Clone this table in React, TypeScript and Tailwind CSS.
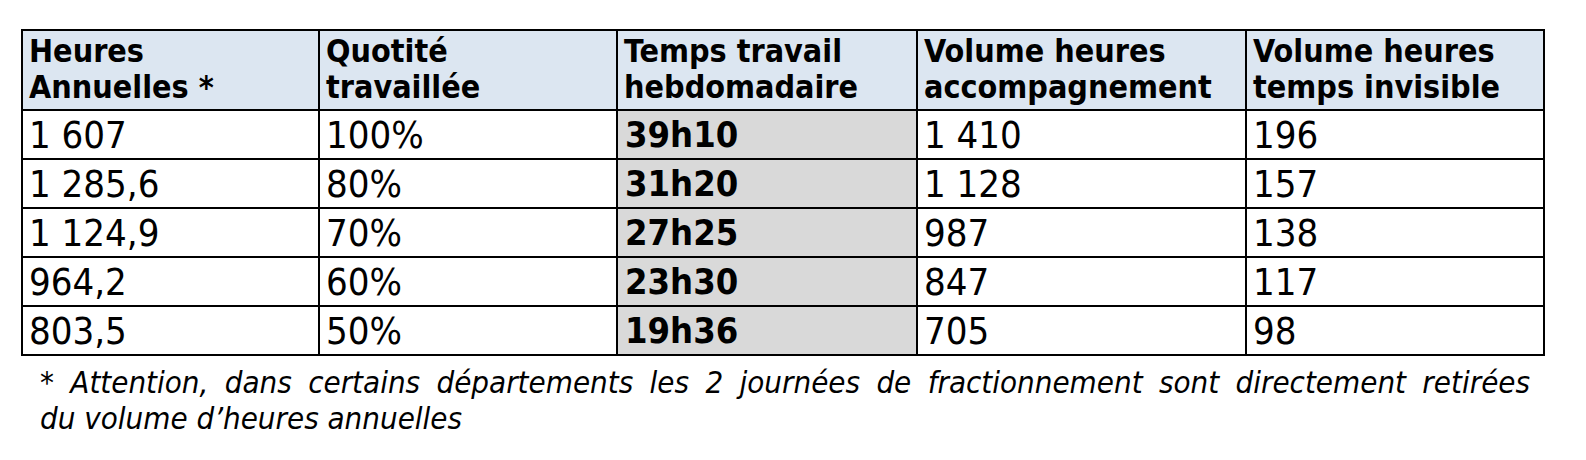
import React from "react";

const rows = [
  ["1 607", "100%", "39h10", "1 410", "196"],
  ["1 285,6", "80%", "31h20", "1 128", "157"],
  ["1 124,9", "70%", "27h25", "987", "138"],
  ["964,2", "60%", "23h30", "847", "117"],
  ["803,5", "50%", "19h36", "705", "98"],
];

const headers: [string, string][] = [
  ["Heures", "Annuelles *"],
  ["Quotité", "travaillée"],
  ["Temps travail", "hebdomadaire"],
  ["Volume heures", "accompagnement"],
  ["Volume heures", "temps invisible"],
];

const widths = ["w-[297px]", "w-[298px]", "w-[300px]", "w-[329px]", "w-[298px]"];

export default function App() {
  return (
    <div
      className="w-[1586px] h-[460px] bg-white text-black pl-[21px] pt-[29px]"
      style={{ fontFamily: '"DejaVu Sans Condensed", "DejaVu Sans", sans-serif', fontStretch: "condensed" }}
    >
      <table className="border-collapse border-2 border-black table-fixed w-[1522px]">
        <thead>
          <tr className="h-[80px] bg-[#dce6f1]">
            {headers.map((h, i) => (
              <th
                key={i}
                className={`${widths[i]} border-2 border-black text-left align-top font-bold text-[32px] leading-[36px] pl-[6px] pt-[2px] whitespace-nowrap`}
              >
                <div>{h[0]}</div>
                <div>{h[1]}</div>
              </th>
            ))}
          </tr>
        </thead>
        <tbody>
          {rows.map((r, ri) => (
            <tr key={ri} className="h-[49px]">
              {r.map((c, ci) => (
                <td
                  key={ci}
                  className={
                    ci === 2
                      ? "border-2 border-black bg-[#d9d9d9] font-bold text-[36px] leading-[40px] pl-[7px] align-middle"
                      : "border-2 border-black text-[38px] leading-[42px] pl-[6px] align-middle"
                  }
                >
                  {c}
                </td>
              ))}
            </tr>
          ))}
        </tbody>
      </table>
      <div className="w-[1509px] pl-[19px] italic text-[31px] leading-[36px] mt-[8px]">
        <div className="text-justify [text-align-last:justify]">
          * Attention, dans certains départements les 2 journées de fractionnement sont directement retirées
        </div>
        <div>du volume d’heures annuelles</div>
      </div>
    </div>
  );
}
